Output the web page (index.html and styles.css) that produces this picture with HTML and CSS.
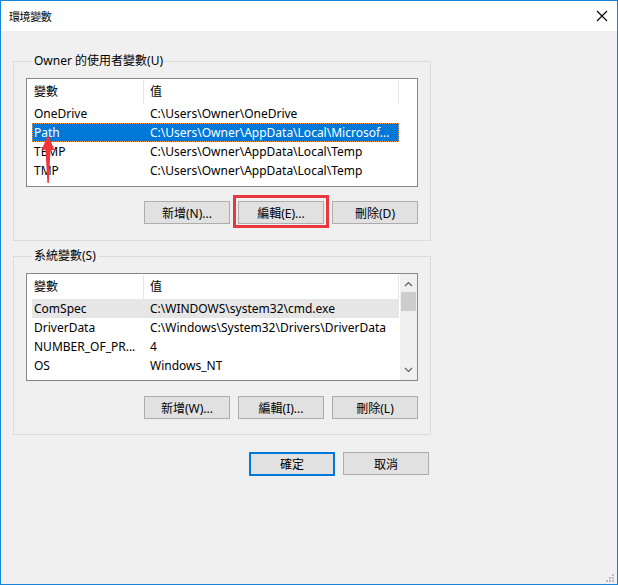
FILE: index.html
```html
<!DOCTYPE html>
<html lang="zh-Hant">
<head>
    <meta charset="UTF-8">
    <title>環境變數</title>
    <link rel="stylesheet" href="styles.css">
</head>
<body>
    <div class="window">
        <div class="titlebar">
            <span class="title">環境變數</span>
            <svg class="close" width="12" height="12" viewBox="0 0 12 12">
                <path d="M1 1 L11 11 M11 1 L1 11" stroke="#000" stroke-width="1.1" fill="none"/>
            </svg>
        </div>

        <div class="dialog">
            <fieldset class="group">
                <legend>Owner 的使用者變數(U)</legend>
                <div class="list">
                    <div class="list-main">
                        <div class="list-head">
                            <div class="head-name">變數</div>
                            <div class="head-value">值</div>
                        </div>
                        <div class="row"><span class="cell-name">OneDrive</span><span class="cell-value">C:\Users\Owner\OneDrive</span></div>
                        <div class="row selected"><span class="cell-name">Path</span><span class="cell-value">C:\Users\Owner\AppData\Local\Microsof...</span></div>
                        <div class="row"><span class="cell-name">TEMP</span><span class="cell-value">C:\Users\Owner\AppData\Local\Temp</span></div>
                        <div class="row"><span class="cell-name">TMP</span><span class="cell-value">C:\Users\Owner\AppData\Local\Temp</span></div>
                    </div>
                </div>
                <div class="buttons">
                    <button class="btn">新增(N)...</button>
                    <button class="btn">編輯(E)...</button>
                    <button class="btn">刪除(D)</button>
                </div>
            </fieldset>

            <fieldset class="group group-system">
                <legend>系統變數(S)</legend>
                <div class="list">
                    <div class="list-main">
                        <div class="list-head">
                            <div class="head-name">變數</div>
                            <div class="head-value">值</div>
                        </div>
                        <div class="row inactive"><span class="cell-name">ComSpec</span><span class="cell-value">C:\WINDOWS\system32\cmd.exe</span></div>
                        <div class="row"><span class="cell-name">DriverData</span><span class="cell-value">C:\Windows\System32\Drivers\DriverData</span></div>
                        <div class="row"><span class="cell-name">NUMBER_OF_PR...</span><span class="cell-value">4</span></div>
                        <div class="row"><span class="cell-name">OS</span><span class="cell-value">Windows_NT</span></div>
                    </div>
                    <div class="scrollbar">
                        <svg class="scroll-arrow" width="9" height="6" viewBox="0 0 9 6">
                            <path d="M1 5 L4.5 1.5 L8 5" stroke="#606060" stroke-width="1.2" fill="none"/>
                        </svg>
                        <div class="scroll-track"><div class="scroll-thumb"></div></div>
                        <svg class="scroll-arrow" width="9" height="6" viewBox="0 0 9 6">
                            <path d="M1 1 L4.5 4.5 L8 1" stroke="#606060" stroke-width="1.2" fill="none"/>
                        </svg>
                    </div>
                </div>
                <div class="buttons">
                    <button class="btn">新增(W)...</button>
                    <button class="btn">編輯(I)...</button>
                    <button class="btn">刪除(L)</button>
                </div>
            </fieldset>

            <div class="footer">
                <button class="btn btn-default">確定</button>
                <button class="btn">取消</button>
            </div>
        </div>

        <div class="grip">
            <span></span>
        </div>

        <!-- anotações por cima da captura -->
        <div class="mark-box"></div>
        <svg class="mark-arrow" width="16" height="52" viewBox="0 0 16 52">
            <path d="M7 0 L13.5 15 L9.5 15 L7.8 48 L6.4 48 L4.5 15 L0.5 15 Z" fill="#f2353a"/>
        </svg>
    </div>
</body>
</html>
```

FILE: styles.css
```css
:root {
    --azul: #1883d7;
    --selecao: #0078d7;
    --fundo: #f0f0f0;
    --borda-grupo: #dcdcdc;
    --borda-lista: #828790;
    --botao: #e1e1e1;
    --borda-botao: #adadad;
    --vermelho: #e8383d;
}

* {
    box-sizing: border-box;
}

body {
    margin: 0;
    font-family: 'Noto Sans', 'Noto Sans CJK TC', sans-serif;
    font-size: 12px;
    color: #000;
}

.window {
    position: relative;
    width: 618px;
    height: 585px;
    border: 1px solid var(--azul);
    background-color: var(--fundo);
}

.titlebar {
    height: 30px;
    background-color: #fff;
    display: flex;
    align-items: center;
    justify-content: space-between;
    padding: 0 9px 0 8px;
}

.title {
    font-family: 'Noto Sans CJK TC', sans-serif;
    font-size: 11px;
    letter-spacing: -0.4px;
}

.close {
    margin-top: -1px;
}

.dialog {
    padding: 22px 0 0 12px;
}

.group {
    width: 417px;
    margin: 0;
    border: 1px solid var(--borda-grupo);
    padding: 9px 12px 16px 12px;
}

.group legend {
    margin-left: 6px;
    padding: 0 2px;
    line-height: 16px;
}

.group-system {
    margin-top: 7px;
    padding-bottom: 15px;
}

.list {
    display: flex;
    width: 392px;
    height: 109px;
    border: 1px solid var(--borda-lista);
    background-color: #fff;
    overflow: hidden;
}

.group-system .list {
    height: 108px;
}

.list-main {
    flex: 1;
    overflow: hidden;
}

.list-head {
    display: flex;
    height: 25px;
    line-height: 24px;
}

.head-name {
    width: 117px;
    padding-left: 7px;
    border-right: 1px solid #e5e5e5;
    margin: 1px 0 0;
}

.head-value {
    width: 255px;
    padding-left: 6px;
    border-right: 1px solid #e5e5e5;
    margin: 1px 0 0;
}

.row {
    display: flex;
    width: 367px;
    height: 19px;
    line-height: 19px;
    margin-left: 5px;
    white-space: nowrap;
}

.cell-name {
    width: 111px;
    padding-left: 2px;
    overflow: hidden;
}

.cell-value {
    padding-left: 7px;
    overflow: hidden;
}

.row.selected {
    background-color: var(--selecao);
    color: #fff;
    outline: 1px dotted #ff9a3c;
    outline-offset: -1px;
}

.row.inactive {
    background-color: #e6e6e6;
}

.scrollbar {
    width: 17px;
    display: flex;
    flex-direction: column;
    align-items: center;
    background-color: var(--fundo);
}

.scroll-arrow {
    margin: 7px 0;
}

.scroll-track {
    flex: 1;
    width: 100%;
    padding: 0 1px;
}

.scroll-thumb {
    height: 19px;
    margin-top: -2px;
    background-color: #cdcdcd;
}

.buttons {
    display: flex;
    justify-content: flex-end;
    gap: 8px;
    margin-top: 14px;
}

.group-system .buttons {
    margin-top: 15px;
}

.btn {
    width: 86px;
    height: 23px;
    padding: 0;
    font-family: inherit;
    font-size: 12px;
    background-color: var(--botao);
    border: 1px solid var(--borda-botao);
    color: #000;
}

.btn-default {
    height: 24px;
    border: 2px solid var(--selecao);
}

.footer {
    width: 416px;
    display: flex;
    justify-content: flex-end;
    gap: 8px;
    margin-top: 17px;
}

.grip {
    position: absolute;
    right: 3px;
    bottom: 2px;
    width: 8px;
    height: 8px;
}

.grip span {
    position: absolute;
    width: 2px;
    height: 2px;
    background-color: #bcbcbc;
    right: 0;
    bottom: 0;
    box-shadow: -3px 0 #bcbcbc, -6px 0 #bcbcbc, 0 -3px #bcbcbc, -3px -3px #bcbcbc, 0 -6px #bcbcbc;
}

.mark-box {
    position: absolute;
    left: 232px;
    top: 194px;
    width: 96px;
    height: 33px;
    border: 3px solid var(--vermelho);
}

.mark-arrow {
    position: absolute;
    left: 40px;
    top: 134px;
}
```
